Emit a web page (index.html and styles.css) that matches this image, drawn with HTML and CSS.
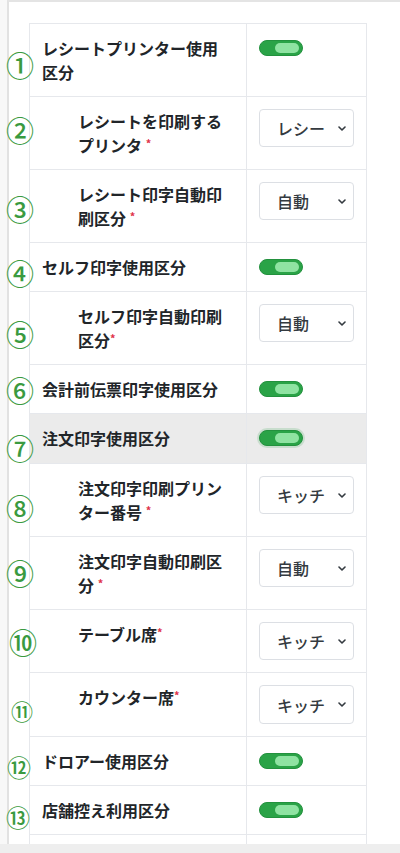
FILE: index.html
```html
<!DOCTYPE html>
<html lang="ja">
<head>
<meta charset="utf-8">
<title>設定</title>
<link rel="stylesheet" href="styles.css">
</head>
<body>
<div class="page">
  <div class="viewport">
    <div class="gutter"></div>
    <div class="card">
      <table class="settings">
        <tr>
          <td class="label">レシートプリンター使用区分</td>
          <td class="ctrl"><span class="toggle"><span class="knob"></span></span></td>
        </tr>
        <tr>
          <td class="label sub">レシートを印刷する<br>プリンタ <span class="req">*</span></td>
          <td class="ctrl"><div class="select"><span class="val">レシー</span><svg class="chev" viewBox="0 0 8 5" width="8" height="5"><path d="M1 1l3 3 3-3" fill="none" stroke="#343a40" stroke-width="1.6" stroke-linecap="round" stroke-linejoin="round"/></svg></div></td>
        </tr>
        <tr>
          <td class="label sub">レシート印字自動印<br>刷区分 <span class="req">*</span></td>
          <td class="ctrl"><div class="select"><span class="val">自動</span><svg class="chev" viewBox="0 0 8 5" width="8" height="5"><path d="M1 1l3 3 3-3" fill="none" stroke="#343a40" stroke-width="1.6" stroke-linecap="round" stroke-linejoin="round"/></svg></div></td>
        </tr>
        <tr>
          <td class="label">セルフ印字使用区分</td>
          <td class="ctrl"><span class="toggle"><span class="knob"></span></span></td>
        </tr>
        <tr>
          <td class="label sub">セルフ印字自動印刷<br>区分<span class="req">*</span></td>
          <td class="ctrl"><div class="select"><span class="val">自動</span><svg class="chev" viewBox="0 0 8 5" width="8" height="5"><path d="M1 1l3 3 3-3" fill="none" stroke="#343a40" stroke-width="1.6" stroke-linecap="round" stroke-linejoin="round"/></svg></div></td>
        </tr>
        <tr>
          <td class="label">会計前伝票印字使用区分</td>
          <td class="ctrl"><span class="toggle"><span class="knob"></span></span></td>
        </tr>
        <tr class="active">
          <td class="label">注文印字使用区分</td>
          <td class="ctrl"><span class="toggle focus"><span class="knob"></span></span></td>
        </tr>
        <tr>
          <td class="label sub">注文印字印刷プリン<br>ター番号 <span class="req">*</span></td>
          <td class="ctrl"><div class="select"><span class="val">キッチ</span><svg class="chev" viewBox="0 0 8 5" width="8" height="5"><path d="M1 1l3 3 3-3" fill="none" stroke="#343a40" stroke-width="1.6" stroke-linecap="round" stroke-linejoin="round"/></svg></div></td>
        </tr>
        <tr>
          <td class="label sub">注文印字自動印刷区<br>分 <span class="req">*</span></td>
          <td class="ctrl"><div class="select"><span class="val">自動</span><svg class="chev" viewBox="0 0 8 5" width="8" height="5"><path d="M1 1l3 3 3-3" fill="none" stroke="#343a40" stroke-width="1.6" stroke-linecap="round" stroke-linejoin="round"/></svg></div></td>
        </tr>
        <tr>
          <td class="label sub">テーブル席<span class="req">*</span></td>
          <td class="ctrl"><div class="select"><span class="val">キッチ</span><svg class="chev" viewBox="0 0 8 5" width="8" height="5"><path d="M1 1l3 3 3-3" fill="none" stroke="#343a40" stroke-width="1.6" stroke-linecap="round" stroke-linejoin="round"/></svg></div></td>
        </tr>
        <tr>
          <td class="label sub">カウンター席<span class="req">*</span></td>
          <td class="ctrl"><div class="select tall"><span class="val">キッチ</span><svg class="chev" viewBox="0 0 8 5" width="8" height="5"><path d="M1 1l3 3 3-3" fill="none" stroke="#343a40" stroke-width="1.6" stroke-linecap="round" stroke-linejoin="round"/></svg></div></td>
        </tr>
        <tr>
          <td class="label">ドロアー使用区分</td>
          <td class="ctrl"><span class="toggle"><span class="knob"></span></span></td>
        </tr>
        <tr>
          <td class="label">店舗控え利用区分</td>
          <td class="ctrl"><span class="toggle"><span class="knob"></span></span></td>
        </tr>
        <tr>
          <td class="label">&nbsp;</td>
          <td class="ctrl"></td>
        </tr>
      </table>
    </div>
    <div class="scrollbar"><div class="track"></div></div>
  </div>
  <div class="bottombar"></div>

  <span class="mark m1">①</span>
  <span class="mark m2">②</span>
  <span class="mark m3">③</span>
  <span class="mark m4">④</span>
  <span class="mark m5">⑤</span>
  <span class="mark m6">⑥</span>
  <span class="mark m7">⑦</span>
  <span class="mark m8">⑧</span>
  <span class="mark m9">⑨</span>
  <span class="mark m10">⑩</span>
  <span class="mark m11">⑪</span>
  <span class="mark m12">⑫</span>
  <span class="mark m13">⑬</span>
</div>
</body>
</html>
```

FILE: styles.css
```css
html, body {
  margin: 0;
  padding: 0;
}
body {
  background: #f7f7f7;
  font-family: "Noto Sans CJK JP", "Noto Sans", sans-serif;
  color: #212529;
}
.page {
  position: relative;
  width: 400px;
  height: 853px;
  display: flex;
  flex-direction: column;
  overflow: hidden;
}
.viewport {
  display: flex;
  height: 844px;
  flex: none;
}
.gutter {
  width: 7px;
  background: #f8f8f8;
  flex: none;
}
.card {
  width: 379px;
  flex: none;
  background: #fff;
  border-left: 2px solid #e2e2e2;
  border-top: 2px solid #e4e4e4;
  border-right: 1px solid #e6e6e6;
  padding: 21px 21px 0 20px;
  box-sizing: content-box;
  overflow: hidden;
}
.scrollbar {
  flex: 1;
  display: flex;
  background: #fff;
}
.scrollbar .track {
  margin-left: 5px;
  flex: 1;
  border-left: 1px solid #e4e4e4;
  background: #f3f3f3;
}
.bottombar {
  flex: 1;
  background: #eeeeee;
}

.settings {
  border-collapse: collapse;
  width: 338px;
  table-layout: fixed;
}
.settings td {
  border: 1px solid #e6e8ec;
  padding: 12px;
  vertical-align: top;
  font-size: 16px;
  line-height: 24px;
}
.settings td.label {
  width: 188px;
  padding-right: 16px;
  font-weight: 700;
  color: #212529;
}
.settings td.label.sub {
  padding-left: 48px;
  width: 152px;
}
.settings td.ctrl {
  padding-right: 12px;
}
.settings tr.active td {
  background: #ebebeb;
  padding-bottom: 13px;
}
.req {
  color: #e0334a;
  font-size: 11px;
  font-weight: 700;
  line-height: 1;
  vertical-align: 4px;
}

.toggle {
  display: inline-flex;
  align-items: center;
  justify-content: flex-end;
  box-sizing: border-box;
  width: 44px;
  height: 16px;
  margin-top: 4px;
  padding-right: 3px;
  border-radius: 8px;
  background: #2aa347;
  border: 1px solid #23913e;
  vertical-align: top;
}
.toggle.focus {
  box-shadow: 0 0 0 2px rgba(42, 163, 71, 0.18);
}
.knob {
  width: 24px;
  height: 10px;
  border-radius: 5px;
  background: #8fe3a2;
}

.select {
  box-sizing: border-box;
  width: 95px;
  height: 38px;
  border: 1px solid #dcdfe4;
  border-radius: 4px;
  background: #fff;
  display: flex;
  align-items: center;
  padding: 0 7px 0 17px;
  justify-content: space-between;
}
.select.tall {
  height: 39px;
}
.select .val {
  font-size: 16px;
  font-weight: 500;
  color: #343a40;
  white-space: nowrap;
  overflow: hidden;
}
.chev {
  flex: none;
}

.mark {
  position: absolute;
  transform: translate(-50%, -50%);
  color: #3a9a40;
  font-family: "Noto Sans CJK JP", sans-serif;
  font-weight: 500;
  font-size: 28px;
  line-height: 1;
}
.m1 { left: 20px; top: 65px; }
.m2 { left: 20px; top: 130px; }
.m3 { left: 20px; top: 209px; }
.m4 { left: 20px; top: 273px; }
.m5 { left: 20px; top: 334px; }
.m6 { left: 20px; top: 390px; }
.m7 { left: 20px; top: 448px; }
.m8 { left: 20px; top: 508px; }
.m9 { left: 20px; top: 573px; }
.m10 { left: 23px; top: 642px; }
.m11 { left: 22px; top: 710px; font-size: 22px; }
.m12 { left: 19px; top: 767px; font-size: 24px; }
.m13 { left: 18px; top: 817px; font-size: 24px; }
```
